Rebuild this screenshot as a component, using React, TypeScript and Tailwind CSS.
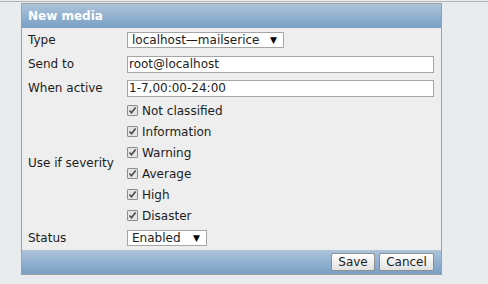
import { FC } from 'react';

const severities = ['Not classified', 'Information', 'Warning', 'Average', 'High', 'Disaster'];

const Check: FC = () => (
  <span className="w-[11px] h-[11px] border border-[#8e8e8e] bg-[#e4e4e4] rounded-[1px] flex items-center justify-center shrink-0">
    <svg width="9" height="9" viewBox="0 0 9 9">
      <path d="M1.5 4.5 L3.5 6.8 L7.6 1.6" fill="none" stroke="#4a4a4a" strokeWidth="1.6" />
    </svg>
  </span>
);

const Select: FC<{ value: string; width: string }> = ({ value, width }) => (
  <div className={`${width} h-[16px] border border-[#a5a5a5] bg-white flex items-center justify-between pl-[4px] pr-[6px]`}>
    <span className="leading-none">{value}</span>
    <span className="text-[9px] leading-none text-black">▼</span>
  </div>
);

const Row: FC<{ label: string; h: string; children: React.ReactNode }> = ({ label, h, children }) => (
  <div className={`flex items-center ${h}`}>
    <div className="w-[105px] pl-[6px]">{label}</div>
    <div className="flex-1 pr-[7px]">{children}</div>
  </div>
);

const App: FC = () => {
  return (
    <div className="w-[488px] h-[284px] bg-[#e9ecef] pt-px text-[12px] text-[#1c1c1c]" style={{ fontFamily: '"DejaVu Sans", Verdana, sans-serif' }}>
      <div className="h-px bg-[#b4b4b4]" />
      <div className="ml-[21px] mt-px w-[421px] border border-[#a0a0a0] bg-[#eeeeee]">
        <div className="h-[24px] bg-gradient-to-b from-[#adc4db] to-[#789fc4] flex items-center pl-[6px] font-bold text-white">
          New media
        </div>
        <Row label="Type" h="h-[24px]">
          <Select value="localhost—mailserice" width="w-[157px]" />
        </Row>
        <Row label="Send to" h="h-[24px]">
          <div className="h-[17px] border border-[#a5a5a5] bg-white flex items-center pl-[1px]">root@localhost</div>
        </Row>
        <Row label="When active" h="h-[24px]">
          <div className="h-[17px] border border-[#a5a5a5] bg-white flex items-center pl-[1px]">1-7,00:00-24:00</div>
        </Row>
        <Row label="Use if severity" h="h-[126px]">
          <div className="flex flex-col">
            {severities.map((s) => (
              <label key={s} className="h-[21px] flex items-center gap-[4px]">
                <Check />
                <span>{s}</span>
              </label>
            ))}
          </div>
        </Row>
        <Row label="Status" h="h-[24px]">
          <Select value="Enabled" width="w-[80px]" />
        </Row>
        <div className="h-[24px] bg-gradient-to-b from-[#adc4db] to-[#789fc4] flex items-center justify-end gap-[4px] pr-[7px]">
          <button className="w-[44px] h-[18px] border border-[#8f8f8f] rounded-[2px] bg-gradient-to-b from-white to-[#e2e2e2] leading-none">Save</button>
          <button className="w-[55px] h-[18px] border border-[#8f8f8f] rounded-[2px] bg-gradient-to-b from-white to-[#e2e2e2] leading-none">Cancel</button>
        </div>
      </div>
    </div>
  );
};

export default App;
